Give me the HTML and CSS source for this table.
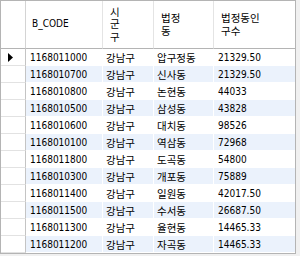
FILE: index.html
```html
<!DOCTYPE html>
<html lang="ko">
<head>
<meta charset="utf-8">
<link rel="stylesheet" href="styles.css">
</head>
<body>
<div class="grid">
  <div class="row head">
    <div class="c rh"></div>
    <div class="c">B_CODE</div>
    <div class="c">시<br>군<br>구</div>
    <div class="c">법정<br>동</div>
    <div class="c last">법정동인<br>구수</div>
  </div>
  <div class="row">
    <div class="c rh"><svg class="arrow" width="5" height="9" viewBox="0 0 5 9"><polygon points="0,0 5,4.5 0,9" fill="#000"/></svg></div>
    <div class="c">1168011000</div><div class="c ko">강남구</div><div class="c ko">압구정동</div><div class="c last">21329.50</div>
  </div>
  <div class="row alt">
    <div class="c rh"></div>
    <div class="c">1168010700</div><div class="c ko">강남구</div><div class="c ko">신사동</div><div class="c last">21329.50</div>
  </div>
  <div class="row">
    <div class="c rh"></div>
    <div class="c">1168010800</div><div class="c ko">강남구</div><div class="c ko">논현동</div><div class="c last">44033</div>
  </div>
  <div class="row alt">
    <div class="c rh"></div>
    <div class="c">1168010500</div><div class="c ko">강남구</div><div class="c ko">삼성동</div><div class="c last">43828</div>
  </div>
  <div class="row">
    <div class="c rh"></div>
    <div class="c">1168010600</div><div class="c ko">강남구</div><div class="c ko">대치동</div><div class="c last">98526</div>
  </div>
  <div class="row alt">
    <div class="c rh"></div>
    <div class="c">1168010100</div><div class="c ko">강남구</div><div class="c ko">역삼동</div><div class="c last">72968</div>
  </div>
  <div class="row">
    <div class="c rh"></div>
    <div class="c">1168011800</div><div class="c ko">강남구</div><div class="c ko">도곡동</div><div class="c last">54800</div>
  </div>
  <div class="row alt">
    <div class="c rh"></div>
    <div class="c">1168010300</div><div class="c ko">강남구</div><div class="c ko">개포동</div><div class="c last">75889</div>
  </div>
  <div class="row">
    <div class="c rh"></div>
    <div class="c">1168011400</div><div class="c ko">강남구</div><div class="c ko">일원동</div><div class="c last">42017.50</div>
  </div>
  <div class="row alt">
    <div class="c rh"></div>
    <div class="c">1168011500</div><div class="c ko">강남구</div><div class="c ko">수서동</div><div class="c last">26687.50</div>
  </div>
  <div class="row">
    <div class="c rh"></div>
    <div class="c">1168011300</div><div class="c ko">강남구</div><div class="c ko">율현동</div><div class="c last">14465.33</div>
  </div>
  <div class="row alt">
    <div class="c rh"></div>
    <div class="c">1168011200</div><div class="c ko">강남구</div><div class="c ko">자곡동</div><div class="c last">14465.33</div>
  </div>
</div>
</body>
</html>
```

FILE: styles.css
```css
html, body {
  margin: 0;
  padding: 0;
  background: #f0f0f0;
  width: 300px;
  height: 256px;
  overflow: hidden;
}

.grid {
  width: 296px;
  height: 254px;
  box-sizing: border-box;
  border: 1px solid #b4b4b4;
  background: #fff;
  font-family: "DejaVu Sans Condensed", "DejaVu Sans", "Noto Sans CJK KR", sans-serif;
  font-size: 10px;
  color: #000;
}

.row {
  display: grid;
  grid-template-columns: 25px 77px 51px 60px 81px;
  height: 17px;
}

.c {
  box-sizing: border-box;
  display: flex;
  align-items: center;
  padding-left: 4px;
  border-right: 1px solid #fff;
  border-bottom: 1px solid #fff;
  white-space: nowrap;
  overflow: hidden;
}

.ko {
  font-family: "Noto Sans CJK KR", sans-serif;
  font-size: 10.5px;
  padding-left: 3px;
}

.c.last {
  border-right: none;
}

.alt .c {
  background: #ebf2fc;
}

.alt .c.rh,
.c.rh {
  background: #fff;
  border-right: 1px solid #c4c4c4;
  border-bottom: 1px solid #e2e2e2;
  padding-left: 0;
  justify-content: center;
}

.arrow {
  display: block;
  margin-left: -6px;
}

.head {
  height: 48px;
}

.head .c {
  padding-left: 7px;
  line-height: 12.5px;
  border-right: 1px solid #e4e4e4;
  border-bottom: 1px solid #b4b4b4;
  font-family: "Noto Sans CJK KR", sans-serif;
  font-size: 10.5px;
}

.head .c:nth-child(2) {
  font-family: "DejaVu Sans Condensed", "DejaVu Sans", sans-serif;
  font-size: 10px;
  padding-left: 6px;
}

.head .c.rh {
  border-right: 1px solid #d4d4d4;
  border-bottom: 1px solid #b4b4b4;
}

.head .c.last {
  border-right: none;
}
```
